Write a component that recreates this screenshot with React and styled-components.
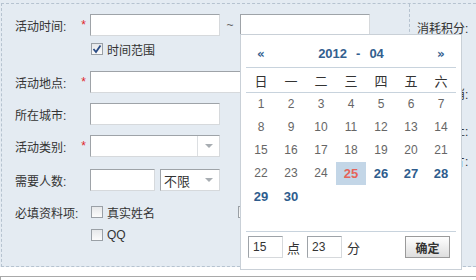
import React from "react";
import styled, { createGlobalStyle } from "styled-components";

const Global = createGlobalStyle`
  html, body { margin: 0; padding: 0; background: #fff; }
  body {
    font-family: "Liberation Sans", "Noto Sans CJK SC", sans-serif;
    font-size: 12px;
    color: #333;
    width: 476px;
    height: 280px;
    overflow: hidden;
  }
`;

const LINE = "#b6c3d0";

const Page = styled.div`
  width: 476px;
  height: 280px;
  overflow: hidden;
`;

const Panel = styled.div`
  background: #e4ebf2;
  padding: 3px 0 0 1px;
`;

const Frame = styled.div`
  height: 264px;
  box-sizing: border-box;
  border-top: 1px dashed ${LINE};
  border-left: 1px dashed ${LINE};
  border-bottom: 1px dashed ${LINE};
  display: flex;
`;

const FormCol = styled.div`
  width: 407px;
  flex: none;
  box-sizing: border-box;
  padding: 10px 0 0 13px;
  display: flex;
  flex-direction: column;
`;

const SideCol = styled.div`
  flex: 1;
  border-left: 1px dashed ${LINE};
  padding: 0 0 0 7px;
  display: flex;
  flex-direction: column;
  white-space: nowrap;
  overflow: hidden;
`;

const SideLabel = styled.div`
  height: 22px;
  line-height: 22px;
  margin-top: ${(p) => p.$mt}px;
`;

const Row = styled.div`
  display: flex;
  align-items: center;
  height: ${(p) => p.$h || 22}px;
  margin-top: ${(p) => p.$mt || 0}px;
`;

const Label = styled.div`
  width: 75px;
  flex: none;
  box-sizing: border-box;
  padding-right: 4px;
  display: flex;
  justify-content: space-between;
  align-items: center;
  white-space: nowrap;
`;

const Star = styled.span`
  color: #e0262b;
  font-size: 12px;
`;

const Input = styled.input`
  width: ${(p) => p.$w}px;
  height: ${(p) => p.$h || 22}px;
  box-sizing: border-box;
  border: 1px solid;
  border-color: #9ea3a8 #d6d9dc #d6d9dc #9ea3a8;
  background: #fff;
  padding: 0 4px;
  margin: 0;
  font: inherit;
  color: #333;
  outline: none;
  flex: none;
`;

const Select = styled.div`
  width: ${(p) => p.$w}px;
  height: 22px;
  box-sizing: border-box;
  border: 1px solid;
  border-color: #9ea3a8 #d6d9dc #d6d9dc #9ea3a8;
  background: #fff;
  display: flex;
  align-items: center;
  margin-left: ${(p) => p.$ml || 0}px;
  flex: none;
`;

const SelectText = styled.span`
  flex: 1;
  padding-left: 3px;
  font-size: 13px;
`;

const Arrow = styled.span`
  width: 21px;
  height: 100%;
  display: flex;
  align-items: center;
  justify-content: center;
  border-left: ${(p) => (p.$divider ? "1px solid #dcdfe2" : "none")};
  &::after {
    content: "";
    border-left: 4px solid transparent;
    border-right: 4px solid transparent;
    border-top: 4px solid #a8adb2;
  }
`;

const Tilde = styled.span`
  width: 20px;
  text-align: center;
  color: #666;
  flex: none;
`;

const TimeWrap = styled.div`
  position: relative;
  flex: none;
`;

const Option = styled.label`
  display: flex;
  align-items: center;
  width: ${(p) => p.$w || "auto"}px;
  flex: none;
  padding-left: 1px;
  gap: 4px;
  font-size: 12px;
`;

const Box = styled.span`
  width: 12px;
  height: 12px;
  box-sizing: border-box;
  border: 1px solid #9aa0a6;
  background: linear-gradient(#e6e8ea, #fbfbfb);
  display: inline-flex;
  align-items: center;
  justify-content: center;
  flex: none;
`;

const Check = ({ checked }) => (
  <Box>
    {checked && (
      <svg width="10" height="10" viewBox="0 0 10 10">
        <path d="M1.5 5 L4 8 L8.5 1.5" fill="none" stroke="#2a4c86" strokeWidth="1.8" />
      </svg>
    )}
  </Box>
);

/* Calendar popup */
const Calendar = styled.div`
  position: absolute;
  top: 20px;
  left: 0;
  z-index: 10;
  width: 222px;
  height: 236px;
  box-sizing: border-box;
  border: 1px solid #c9d0d7;
  background: #fff;
  padding: 8px 5px 0;
`;

const CalHead = styled.div`
  height: 25px;
  box-sizing: border-box;
  padding: 0 11px 3px;
  border-bottom: 1px solid #c8d3dd;
  display: flex;
  justify-content: space-between;
  align-items: center;
  font-weight: bold;
  color: #33608f;
`;

const Nav = styled.span`
  width: 8px;
  font-size: 12px;
  font-family: "DejaVu Sans", sans-serif;
  text-align: center;
`;

const Title = styled.span`
  font-size: 13px;
  display: flex;
  align-items: center;
`;

const Dash = styled.span`
  margin: 0 9px;
`;

const WeekRow = styled.div`
  display: grid;
  grid-template-columns: repeat(7, 30px);
  height: 25px;
  box-sizing: border-box;
  border-bottom: 1px solid #c8d3dd;
  align-items: center;
  text-align: center;
  font-size: 13px;
  color: #333;
`;

const DayGrid = styled.div`
  display: grid;
  grid-template-columns: repeat(7, 30px);
  grid-auto-rows: 23px;
  height: 139px;
  box-sizing: border-box;
  border-bottom: 1px solid #c8d3dd;
`;

const Day = styled.span`
  text-align: center;
  line-height: 23px;
  font-size: ${(p) => (p.$bold ? 13 : 12)}px;
  font-weight: ${(p) => (p.$bold ? "bold" : "normal")};
  color: ${(p) => (p.$today ? "#e5645a" : p.$bold ? "#2e5c8d" : "#666")};
  background: ${(p) => (p.$today ? "#c3d6e7" : "transparent")};
`;

const CalFoot = styled.div`
  display: flex;
  align-items: center;
  padding: 4px 6px 0 2px;
`;

const Unit = styled.span`
  margin: 0 ${(p) => p.$r}px 0 ${(p) => p.$l}px;
  font-size: 13px;
`;

const OkButton = styled.button`
  margin-left: auto;
  width: 45px;
  height: 22px;
  box-sizing: border-box;
  border: 1px solid #9a9a9a;
  background: linear-gradient(#fefefe, #dedede);
  font: bold 12px "Liberation Sans", "Noto Sans CJK SC", sans-serif;
  color: #333;
  padding: 0;
`;

const Bottom = styled.div`
  margin-top: 9px;
  height: 3px;
  border-top: 1px solid #a9a9a9;
  border-left: 1px solid #a9a9a9;
`;

const weekdays = ["日", "一", "二", "三", "四", "五", "六"];

function CalendarPopup() {
  const days = [];
  for (let d = 1; d <= 30; d++) days.push(d);
  return (
    <Calendar>
      <CalHead>
        <Nav>«</Nav>
        <Title>
          2012<Dash>-</Dash>04
        </Title>
        <Nav>»</Nav>
      </CalHead>
      <WeekRow>
        {weekdays.map((w) => (
          <span key={w}>{w}</span>
        ))}
      </WeekRow>
      <DayGrid>
        {days.map((d) => (
          <Day key={d} $bold={d >= 25} $today={d === 25}>
            {d}
          </Day>
        ))}
      </DayGrid>
      <CalFoot>
        <Input $w={35} defaultValue="15" />
        <Unit $l={4} $r={7}>点</Unit>
        <Input $w={35} defaultValue="23" />
        <Unit $l={5} $r={0}>分</Unit>
        <OkButton>确定</OkButton>
      </CalFoot>
    </Calendar>
  );
}

export default function App() {
  return (
    <Page>
      <Global />
      <Panel>
        <Frame>
          <FormCol>
            <Row>
              <Label>
                活动时间:<Star>*</Star>
              </Label>
              <Input $w={130} />
              <Tilde>~</Tilde>
              <TimeWrap>
                <Input $w={130} />
                <CalendarPopup />
              </TimeWrap>
            </Row>
            <Row $mt={6} $h={14}>
              <Label />
              <Option>
                <Check checked />
                时间范围
              </Option>
            </Row>
            <Row $mt={15}>
              <Label>
                活动地点:<Star>*</Star>
              </Label>
              <Input $w={280} />
            </Row>
            <Row $mt={10}>
              <Label>所在城市:</Label>
              <Input $w={130} />
            </Row>
            <Row $mt={10}>
              <Label>
                活动类别:<Star>*</Star>
              </Label>
              <Select $w={130}>
                <SelectText />
                <Arrow $divider />
              </Select>
            </Row>
            <Row $mt={12}>
              <Label>需要人数:</Label>
              <Input $w={65} />
              <Select $w={60} $ml={5}>
                <SelectText>不限</SelectText>
                <Arrow />
              </Select>
            </Row>
            <Row $mt={14} $h={14}>
              <Label>必填资料项:</Label>
              <Option $w={146}>
                <Check />
                真实姓名
              </Option>
              <Option>
                <Check />
                手机号码
              </Option>
            </Row>
            <Row $mt={9} $h={14}>
              <Label />
              <Option>
                <Check />
                QQ
              </Option>
            </Row>
          </FormCol>
          <SideCol>
            <SideLabel $mt={14}>消耗积分:</SideLabel>
            <SideLabel $mt={44}>报名取消:</SideLabel>
            <SideLabel $mt={15}>报名截止:</SideLabel>
            <SideLabel $mt={8}>活动图片:</SideLabel>
          </SideCol>
        </Frame>
      </Panel>
      <Bottom />
    </Page>
  );
}
